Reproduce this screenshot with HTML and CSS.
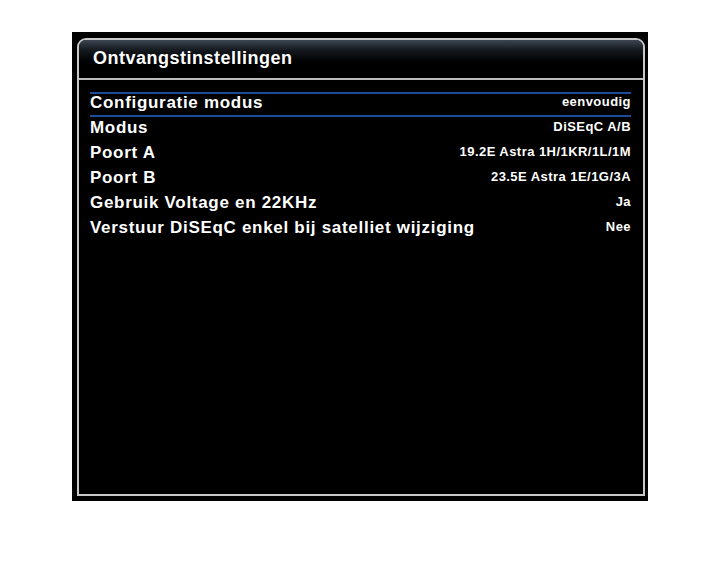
FILE: index.html
```html
<!DOCTYPE html>
<html>
<head>
<meta charset="utf-8">
<link rel="stylesheet" href="styles.css">
</head>
<body>
<div class="screen">
  <div class="frame">
    <div class="titlebar">Ontvangstinstellingen</div>
    <div class="list">
      <div class="row selected"><span class="label">Configuratie modus</span><span class="value">eenvoudig</span></div>
      <div class="row"><span class="label">Modus</span><span class="value">DiSEqC A/B</span></div>
      <div class="row"><span class="label">Poort A</span><span class="value">19.2E Astra 1H/1KR/1L/1M</span></div>
      <div class="row"><span class="label">Poort B</span><span class="value">23.5E Astra 1E/1G/3A</span></div>
      <div class="row"><span class="label">Gebruik Voltage en 22KHz</span><span class="value">Ja</span></div>
      <div class="row"><span class="label">Verstuur DiSEqC enkel bij satelliet wijziging</span><span class="value">Nee</span></div>
    </div>
  </div>
</div>
</body>
</html>
```
FILE: styles.css
```css
html, body {
  margin: 0;
  padding: 0;
  background: #fff;
}
body {
  width: 720px;
  height: 576px;
  font-family: "Liberation Sans", Arial, sans-serif;
}
.screen {
  margin: 32px 0 0 72px;
  width: 576px;
  height: 469px;
  background: #000;
  padding: 6px 3px 5px 5px;
  box-sizing: border-box;
}
.frame {
  height: 100%;
  box-sizing: border-box;
  border: 2px solid #c8c8c8;
  border-radius: 9px 9px 0 0;
  display: flex;
  flex-direction: column;
}
.titlebar {
  height: 40px;
  box-sizing: border-box;
  border-bottom: 2px solid #bdbdbd;
  border-radius: 7px 7px 0 0;
  background: linear-gradient(#3c4652 0px, #151a20 10px, #000 22px);
  color: #fff;
  font-weight: bold;
  font-size: 18px;
  letter-spacing: 0.5px;
  padding: 8px 0 0 14px;
}
.list {
  padding: 12px 12px 0 11px;
  display: flex;
  flex-direction: column;
}
.row {
  height: 25px;
  box-sizing: border-box;
  display: flex;
  justify-content: space-between;
  align-items: center;
  color: #fff;
}
.row.selected {
  border-top: 2px solid #1e4c9c;
  border-bottom: 2px solid #1e4c9c;
}
.label {
  font-weight: bold;
  font-size: 17px;
  letter-spacing: 0.7px;
  padding-bottom: 3px;
}
.value {
  font-weight: bold;
  font-size: 13px;
  letter-spacing: 0.45px;
  padding-bottom: 7px;
}
```
